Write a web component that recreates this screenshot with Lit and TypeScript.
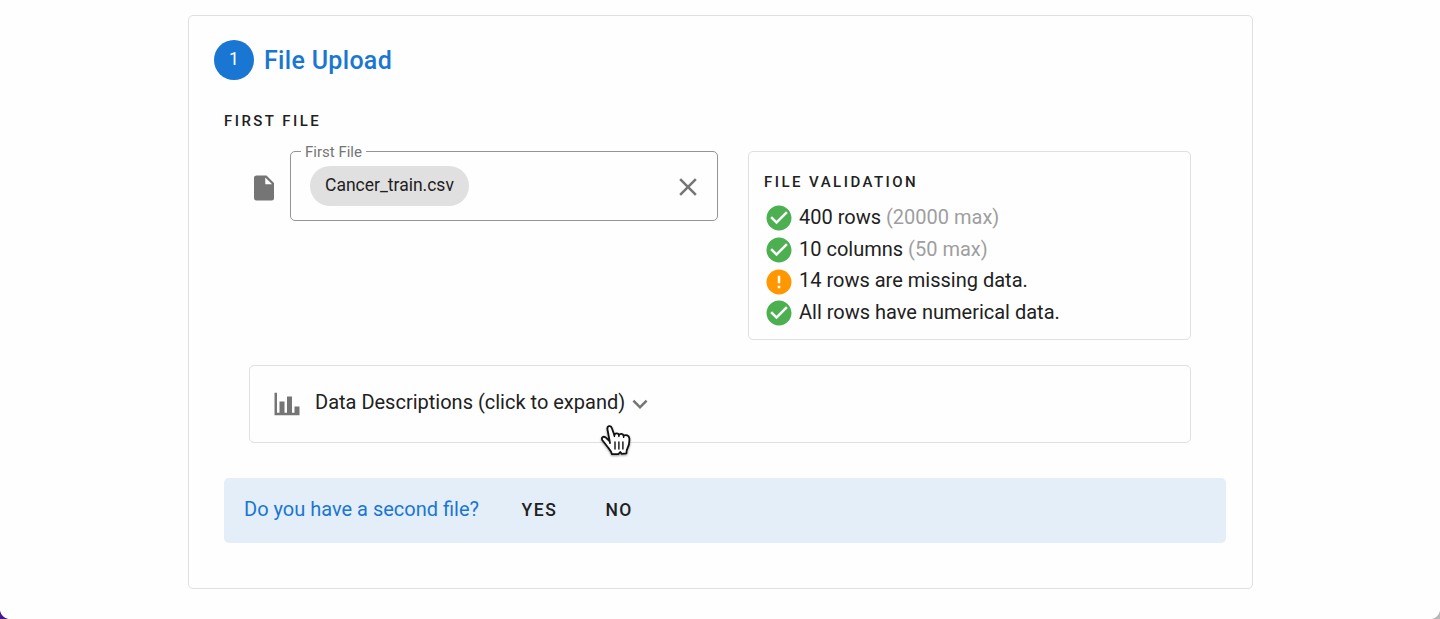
import { LitElement, html, css, svg } from "lit";
import { customElement, property } from "lit/decorators.js";

const ICONS: Record<string, string> = {
  file: "M13,9V3.5L18.5,9M6,2C4.89,2 4,2.89 4,4V20A2,2 0 0,0 6,22H18A2,2 0 0,0 20,20V8L14,2H6Z",
  close: "M19,6.41L17.59,5L12,10.59L6.41,5L5,6.41L10.59,12L5,17.59L6.41,19L12,13.41L17.59,19L19,17.59L13.41,12L19,6.41Z",
  check: "M12 2C6.5 2 2 6.5 2 12S6.5 22 12 22 22 17.5 22 12 17.5 2 12 2M10 17L5 12L6.41 10.59L10 14.17L17.59 6.58L19 8L10 17Z",
  alert: "M13,13H11V7H13M13,17H11V15H13M12,2A10,10 0 0,0 2,12A10,10 0 0,0 12,22A10,10 0 0,0 22,12A10,10 0 0,0 12,2Z",
  chart: "M22,21H2V3H4V19H6V10H10V19H12V6H16V19H18V14H22V21Z",
  chevron: "M7.41,8.58L12,13.17L16.59,8.58L18,10L12,16L6,10L7.41,8.58Z",
};

@customElement("md-icon")
export class MdIcon extends LitElement {
  @property() name = "file";
  static styles = css`
    :host { display: block; flex: none; width: 30px; height: 30px; color: #757575; }
    svg { display: block; width: 30px; height: 30px; fill: currentColor; }
  `;
  render() {
    return html`<svg viewBox="0 0 24 24">${svg`<path d=${ICONS[this.name]}></path>`}</svg>`;
  }
}

@customElement("app-root")
export class AppRoot extends LitElement {
  private checks = [
    { icon: "check", text: "400 rows", note: "(20000 max)" },
    { icon: "check", text: "10 columns", note: "(50 max)" },
    { icon: "alert", text: "14 rows are missing data.", note: "" },
    { icon: "check", text: "All rows have numerical data.", note: "" },
  ];

  static styles = css`
    :host {
      display: block; position: relative; box-sizing: border-box; height: 619px; overflow: hidden;
      padding: 15px 187px 0 188px; background: #fefefe; color: #212121;
      font-family: Roboto, sans-serif; font-size: 20px; line-height: 30px;
    }
    * { box-sizing: border-box; }
    .card { height: 574px; border: 1px solid #e0e0e0; border-radius: 5px; padding: 24px 26px 0 25px; background: #fefefe; }
    .head { display: flex; align-items: center; height: 40px; gap: 10px; color: #1976d2; }
    .step { width: 40px; height: 40px; border-radius: 50%; background: #1976d2; color: #fff; text-align: center; font-size: 17.5px; line-height: 39px; }
    .title { font-size: 25px; font-weight: 500; letter-spacing: 0.31px; line-height: 40px; padding-top: 2px; }
    .overline { font-size: 15px; font-weight: 500; letter-spacing: 2.46px; line-height: 20px; text-transform: uppercase; }
    .first { margin: 31px 0 0 10px; }
    .row { display: flex; align-items: flex-start; margin: 20px 35px 0 35px; }
    .row > md-icon { margin: 22px 11.5px 0 -0.5px; }
    .field { position: relative; width: 428px; height: 70px; border: 1px solid #949494; border-radius: 5px; display: flex; align-items: center; justify-content: space-between; padding: 0 14.5px 0 19px; margin-right: 30px; }
    .field md-icon { margin-top: 1.5px; }
    .label { position: absolute; left: 10px; top: -9px; padding: 0 4px; background: #fefefe; font-size: 15px; line-height: 18px; color: #757575; white-space: nowrap; }
    .chip { height: 40px; border-radius: 20px; background: #e0e0e0; padding: 0 15px; font-size: 17.5px; line-height: 39px; }
    .valid { flex: 1; height: 189px; border: 1px solid #e0e0e0; border-radius: 5px; padding: 20px 15px 0; }
    .list { display: flex; flex-direction: column; margin-top: 10px; }
    .item { display: flex; align-items: center; height: 31.7px; gap: 5px; }
    .item md-icon { margin: 1px 0.5px 0 -0.5px; }
    .item span { position: relative; top: -1px; }
    .item .note { color: #9e9e9e; position: static; }
    .check { color: #4caf50; }
    .alert { color: #ff9800; }
    .desc { display: flex; align-items: center; height: 78px; margin: 25px 35px 0; padding: 0 0 0 22px; border: 1px solid #e0e0e0; border-radius: 5px; }
    .desc .text { margin: 0 0 4px 13px; }
    .ask { display: flex; align-items: center; height: 65px; margin: 35px 0 0 10px; padding: 0 20px 3px; border-radius: 5px; background: #e4eef9; color: #1976d2; }
    .btn { color: #212121; font-size: 17.5px; font-weight: 500; letter-spacing: 1.56px; margin-left: 42.5px; padding-top: 2px; }
    .btn + .btn { margin-left: 48px; }
    .cursor { position: absolute; left: 597.5px; top: 421px; width: 36px; height: 40px; filter: drop-shadow(0 1.5px 1px rgba(0, 0, 0, 0.4)); }
    .corner { position: absolute; bottom: 0; width: 10px; height: 10px; }
    .left { left: 0; background: radial-gradient(circle at 100% 0, #fefefe 9.6px, #4a1590 10.4px); }
    .right { right: 0; background: radial-gradient(circle at 0 0, #fefefe 9.6px, #b8b8b8 10.4px); }
  `;

  render() {
    return html`
      <div class="card">
        <div class="head"><div class="step">1</div><div class="title">File Upload</div></div>
        <div class="overline first">First File</div>
        <div class="row">
          <md-icon name="file"></md-icon>
          <div class="field">
            <span class="label">First File</span>
            <span class="chip">Cancer_train.csv</span>
            <md-icon name="close"></md-icon>
          </div>
          <div class="valid">
            <div class="overline">File Validation</div>
            <div class="list">
              ${this.checks.map((c) => html`<div class="item"><md-icon class=${c.icon} name=${c.icon}></md-icon><span>${c.text} <span class="note">${c.note}</span></span></div>`)}
            </div>
          </div>
        </div>
        <div class="desc">
          <md-icon name="chart"></md-icon>
          <span class="text">Data Descriptions (click to expand)</span>
          <md-icon name="chevron"></md-icon>
        </div>
        <div class="ask"><span>Do you have a second file?</span><span class="btn">YES</span><span class="btn">NO</span></div>
      </div>
      <svg class="cursor" viewBox="0 0 36 40">
        <path d="M12 22L9.4 8C9 4.9 12.6 4 13.7 6.8L16.4 14.2C17.1 11.8 20.3 11.9 20.9 14C22.2 12.1 25 12.5 25.6 14.8C27.8 13.4 31 14.5 31.3 17.2C31.7 21.5 31 24.3 29.5 27.3C28.8 28.6 28.4 30.4 28.4 32.3L23.6 32.8L22.3 31L20.3 33.2H14C13.4 30.2 11.6 28.4 9.7 26L4.4 19.2C2.9 16.7 5.4 14.8 7.6 16.4L11.4 20" fill="#fff" stroke="#111" stroke-width="1.8" stroke-linejoin="round" stroke-linecap="round"></path>
        <path d="M17 21V28M20.9 21V28M24.9 21V28M16.4 14.2V15.6M20.9 14V15.6M25.6 14.8V16.4" fill="none" stroke="#111" stroke-width="1.4" stroke-linecap="round"></path>
      </svg>
      <div class="corner left"></div>
      <div class="corner right"></div>
    `;
  }
}
